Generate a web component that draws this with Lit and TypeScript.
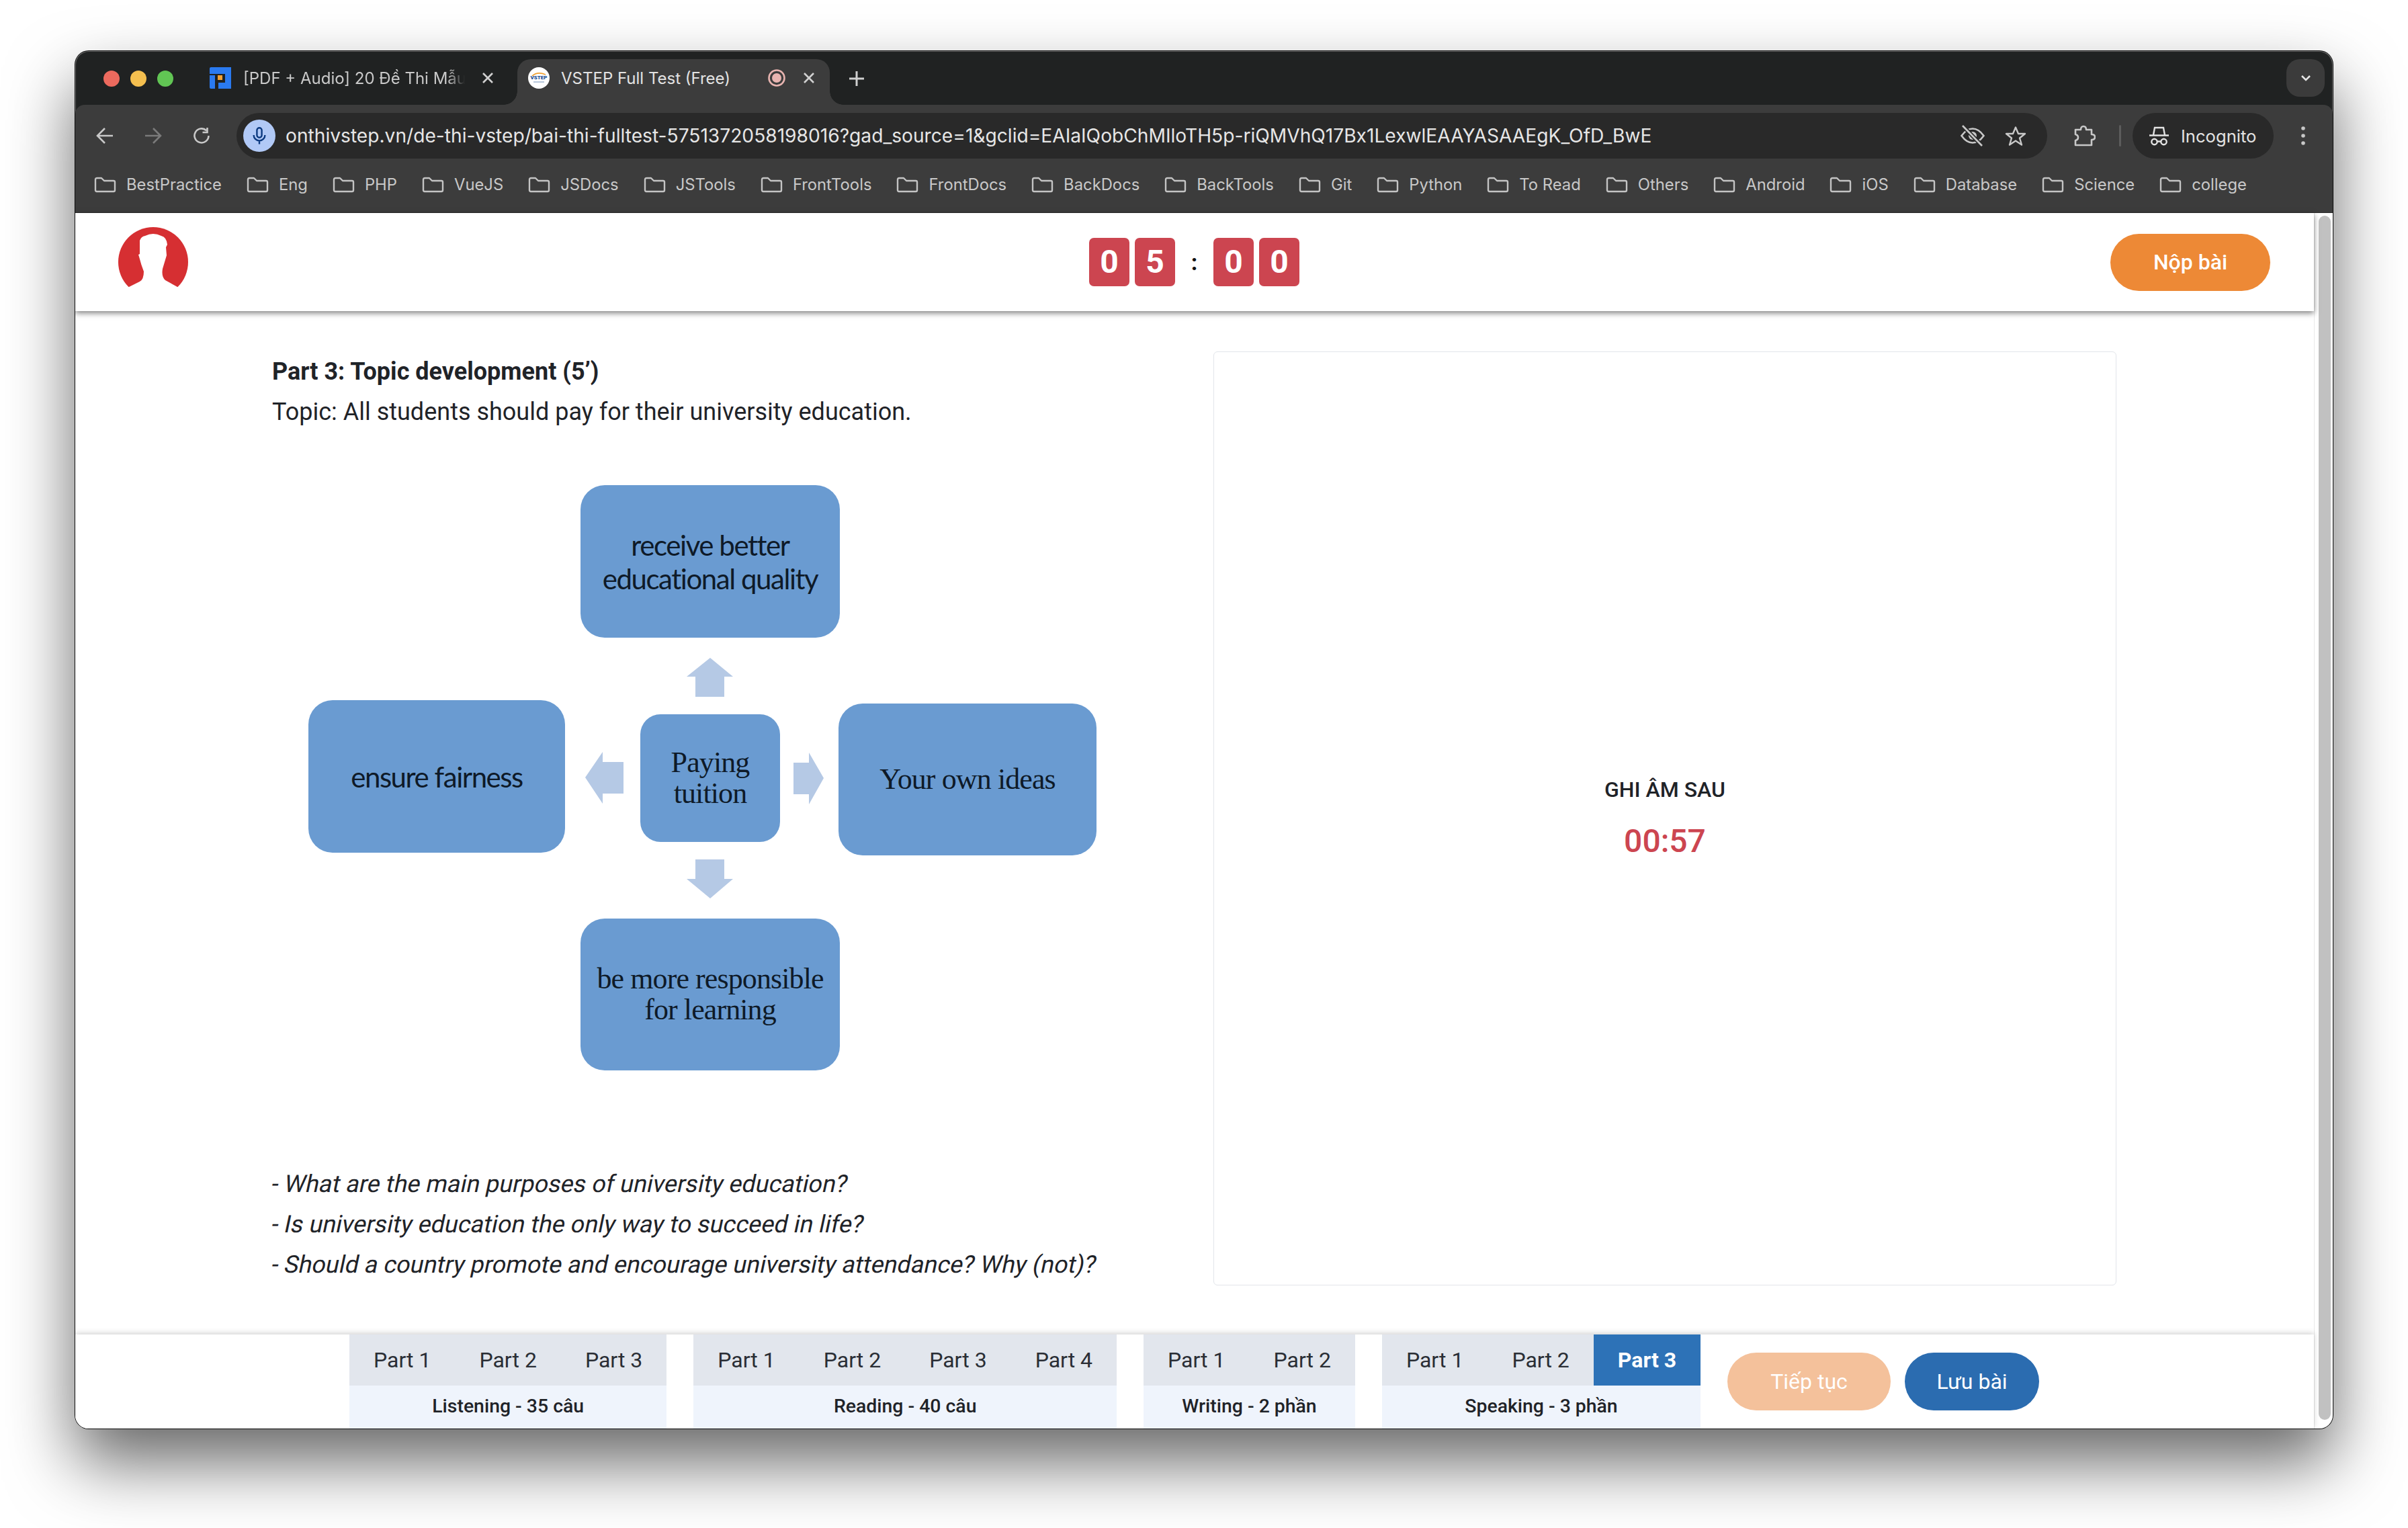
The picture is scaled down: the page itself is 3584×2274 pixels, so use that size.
import { LitElement, css, html, svg } from "lit";
import { customElement } from "lit/decorators.js";

const BOOKMARKS = ["BestPractice", "Eng", "PHP", "VueJS", "JSDocs", "JSTools", "FrontTools", "FrontDocs", "BackDocs", "BackTools", "Git", "Python", "To Read", "Others", "Android", "iOS", "Database", "Science", "college"];

const URL_TEXT = "onthivstep.vn/de-thi-vstep/bai-thi-fulltest-5751372058198016?gad_source=1&gclid=EAIaIQobChMIloTH5p-riQMVhQ17Bx1LexwlEAAYASAAEgK_OfD_BwE";

const PROMPTS = [
  "- What are the main purposes of university education?",
  "- Is university education the only way to succeed in life?",
  "- Should a country promote and encourage university attendance? Why (not)?",
];

const SECTIONS = [
  { label: "Listening - 35 câu", parts: ["Part 1", "Part 2", "Part 3"] },
  { label: "Reading - 40 câu", parts: ["Part 1", "Part 2", "Part 3", "Part 4"] },
  { label: "Writing - 2 phần", parts: ["Part 1", "Part 2"] },
  { label: "Speaking - 3 phần", parts: ["Part 1", "Part 2", "Part 3"], active: 2 },
];

// diagram origin is 405,681 in the page
const NODES = [
  { x: 459, y: 41, w: 386, h: 227, r: 36, serif: false, lines: ["receive better", "educational quality"] },
  { x: 54, y: 361, w: 382, h: 227, r: 36, serif: false, lines: ["ensure fairness"] },
  { x: 548, y: 382, w: 208, h: 190, r: 30, serif: true, lines: ["Paying", "tuition"] },
  { x: 843, y: 366, w: 384, h: 226, r: 36, serif: true, lines: ["Your own ideas"] },
  { x: 459, y: 686, w: 386, h: 226, r: 36, serif: true, lines: ["be more responsible", "for learning"] },
];

const ARROWS = [
  "652,298 686,326 673,326 673,356 630,356 630,326 617,326",
  "630,598 673,598 673,627 686,627 652,656 617,627 630,627",
  "466,476 492,438 492,453 523,453 523,500 492,500 492,515",
  "776,454 799,454 799,439 821,477 799,516 799,501 776,501",
];

const folder = svg`<path d="M2 4.5Q2 2 4.5 2H11L15 6H29Q31 6 31 8V20Q31 22 29 22H4Q2 22 2 20Z" fill="none" stroke="#c4c4c4" stroke-width="2.4" stroke-linejoin="round"/>`;

@customElement("app-root")
export class AppRoot extends LitElement {
  static styles = css`
    :host {
      display: block;
      width: 3584px;
      height: 2274px;
      padding: 76px 112px 148px;
      box-sizing: border-box;
      background: #fff;
      overflow: hidden;
      font-family: Roboto, sans-serif;
      color: #1f2328;
    }
    svg { display: block; flex: none; }

    .window {
      height: 100%;
      display: flex;
      flex-direction: column;
      border-radius: 20px;
      overflow: hidden;
      background: #202222;
      box-shadow: 0 50px 100px rgba(0, 0, 0, 0.6), 0 0 0 1px #111, inset 0 0 0 1px #6a6a6a;
    }

    .tabbar {
      height: 80px;
      flex: none;
      display: flex;
      align-items: flex-start;
      padding-left: 42px;
      font-family: Inter, sans-serif;
      font-size: 24px;
      color: #c9c9c9;
    }
    .lights { display: flex; gap: 16px; margin-top: 29px; }
    .light { width: 24px; height: 24px; border-radius: 50%; }
    .tab-one {
      display: flex;
      align-items: center;
      height: 32px;
      margin-top: 24px;
      margin-left: 54px;
    }
    .tab-one .title {
      width: 330px;
      margin-left: 18px;
      white-space: nowrap;
      -webkit-mask-image: linear-gradient(90deg, #000 92%, transparent);
      mask-image: linear-gradient(90deg, #000 92%, transparent);
    }
    .tab-one .close { margin-left: 24px; }
    .tab-active {
      position: relative;
      display: flex;
      align-items: center;
      align-self: flex-end;
      height: 68px;
      margin-left: 34px;
      padding: 0 23px 12px 16px;
      box-sizing: border-box;
      width: 465px;
      background: #3c3c3c;
      border-radius: 20px 20px 0 0;
      color: #e3e3e3;
    }
    .tab-active::before, .tab-active::after {
      content: "";
      position: absolute;
      bottom: 0;
      width: 20px;
      height: 20px;
    }
    .tab-active::before { left: -20px; background: radial-gradient(circle at 0 0, transparent 19.5px, #3c3c3c 20px); }
    .tab-active::after { right: -20px; background: radial-gradient(circle at 100% 0, transparent 19.5px, #3c3c3c 20px); }
    .tab-active .title { width: 289px; flex: none; margin: 0 0 0 17px; white-space: nowrap; }
    .tab-active .record { margin-left: 19px; }
    .tab-active .close { margin-left: 25px; }
    .new-tab { margin: 29px 0 0 28px; }
    .tab-list {
      width: 57px;
      height: 56px;
      margin: 12px 12px 0 auto;
      border-radius: 20px;
      background: #3b3b3b;
      display: flex;
      align-items: center;
      justify-content: center;
    }

    .toolbar {
      flex: none;
      height: 161px;
      box-sizing: border-box;
      background: #3c3c3c;
      border-radius: 14px 14px 0 0;
      border-bottom: 1px solid #2e2e2e;
      font-family: Inter, sans-serif;
    }
    .nav-row {
      display: flex;
      align-items: center;
      height: 68px;
      padding: 12px 41px 0 8px;
    }
    .nav-btn {
      width: 72px;
      display: flex;
      justify-content: center;
      flex: none;
    }
    .address {
      flex: 1;
      min-width: 0;
      height: 68px;
      margin-left: 16px;
      display: flex;
      align-items: center;
      padding: 0 31px 0 10px;
      border-radius: 34px;
      background: #292929;
    }
    .mic {
      width: 48px;
      height: 48px;
      flex: none;
      border-radius: 50%;
      background: #b1c9f6;
      display: flex;
      align-items: center;
      justify-content: center;
    }
    .url {
      flex: 1;
      margin-left: 15px;
      font-size: 28.17px;
      color: #e6e6e6;
      white-space: nowrap;
    }
    .address-icons { display: flex; align-items: center; gap: 30px; }
    .puzzle { margin-left: 39px; }
    .divider { width: 3px; height: 32px; margin-left: 35px; background: #5c5c5c; border-radius: 2px; flex: none; }
    .incognito {
      width: 210px;
      height: 68px;
      margin-left: 17px;
      box-sizing: border-box;
      padding-left: 25px;
      display: flex;
      align-items: center;
      gap: 18px;
      border-radius: 34px;
      background: #292929;
      color: #e3e3e3;
      font-size: 25.6px;
      flex: none;
    }
    .dots { margin-left: 41px; }

    .bookmarks {
      display: flex;
      align-items: center;
      gap: 37px;
      height: 23px;
      margin: 27px 0 0 28px;
      font-size: 23.8px;
      color: #c8c8c8;
      white-space: nowrap;
    }
    .bookmark { display: flex; align-items: center; gap: 15px; }

    .body { flex: 1; min-height: 0; display: flex; background: #fff; }
    .page { flex: 1; min-width: 0; display: flex; flex-direction: column; }
    .scrollbar {
      width: 28px;
      flex: none;
      box-sizing: border-box;
      border-left: 1px solid #e9e9e9;
      padding: 4px 3px 13px 6px;
      display: flex;
    }
    .scrollbar div { flex: 1; background: #c1c1c1; border-radius: 9px; }

    .header {
      position: relative;
      z-index: 1;
      flex: none;
      height: 146px;
      display: grid;
      grid-template-columns: 1fr auto 1fr;
      align-items: center;
      padding: 0 65px 0 64px;
      background: #fff;
      box-shadow: 0 3px 8px rgba(0, 0, 0, 0.5);
    }
    .timer { display: flex; align-items: center; gap: 8px; }
    .digit {
      width: 60px;
      height: 72px;
      border-radius: 7px;
      background: #cc4550;
      color: #fff;
      font-size: 48px;
      font-weight: 700;
      line-height: 72px;
      text-align: center;
    }
    .colon { width: 41px; text-align: center; font-size: 34px; font-weight: 700; color: #111; }
    .submit {
      justify-self: end;
      width: 238px;
      height: 85px;
      border-radius: 43px;
      background: #ed8936;
      color: #fff;
      font-size: 32px;
      font-weight: 500;
      display: flex;
      align-items: center;
      justify-content: center;
    }

    .main { flex: 1; min-height: 0; display: flex; padding: 60px 0 0 293px; }
    .question { width: 1401px; flex: none; font-size: 36px; line-height: 60px; color: #1f2328; }
    .question b { font-weight: 700; display: block; }
    .diagram { position: relative; height: 1051px; margin-top: 38px; }
    .node {
      position: absolute;
      background: #6a9bd1;
      color: #0e1a28;
      display: flex;
      flex-direction: column;
      align-items: center;
      justify-content: center;
      text-align: center;
      font-family: Lato, sans-serif;
      font-size: 42px;
      line-height: 50px;
      letter-spacing: -1.45px;
      white-space: nowrap;
    }
    .node.serif { font-family: "Liberation Serif", serif; font-size: 44px; line-height: 46px; letter-spacing: -0.9px; }
    .arrows { position: absolute; left: 0; top: 0; }
    .prompt { transform: skewX(-12deg); transform-origin: 0 50%; }
    .panel {
      width: 1344px;
      height: 1390px;
      flex: none;
      box-sizing: border-box;
      border: 1px solid #e2e5ea;
      border-radius: 6px;
      display: flex;
      flex-direction: column;
      align-items: center;
      justify-content: center;
    }
    .panel .label { font-size: 32px; font-weight: 500; line-height: 40px; }
    .panel .time { font-size: 48px; font-weight: 500; line-height: 60px; margin-top: 27px; color: #cc4550; }

    .footer {
      position: relative;
      flex: none;
      height: 140px;
      display: flex;
      padding-left: 408px;
      gap: 40px;
      background: #fff;
      box-shadow: 0 -2px 8px rgba(0, 0, 0, 0.18);
    }
    .section { display: flex; flex-direction: column; flex: none; }
    .parts { display: flex; height: 76px; background: #e2e6ed; }
    .part {
      padding: 0 36px;
      font-size: 32px;
      line-height: 76px;
      color: #2a2e35;
      white-space: nowrap;
    }
    .part.active { background: #2d72b7; color: #fff; font-weight: 700; }
    .section-label {
      flex: 1;
      background: #eff4fc;
      text-align: center;
      font-size: 28.4px;
      font-weight: 500;
      line-height: 62px;
      color: #1f2328;
    }
    .actions { display: flex; align-items: center; gap: 21px; margin-top: -1px; }
    .btn {
      height: 86px;
      border-radius: 43px;
      color: #fff;
      font-size: 32px;
      display: flex;
      align-items: center;
      justify-content: center;
    }
    .btn.next { width: 243px; background: #f4c19b; }
    .btn.save { width: 200px; background: #2b6cb0; }
  `;

  private closeIcon() {
    return html`<svg class="close" width="20" height="20" viewBox="0 0 20 20"><path d="M3 3 17 17M17 3 3 17" stroke="#d0d0d0" stroke-width="2.6"/></svg>`;
  }

  private renderTabs() {
    return html`
      <div class="tabbar">
        <div class="lights">
          <div class="light" style="background:#ec6a5e"></div>
          <div class="light" style="background:#f4bf4f"></div>
          <div class="light" style="background:#61c554"></div>
        </div>
        <div class="tab-one">
          <svg width="32" height="32" viewBox="0 0 32 32">
            <path d="M2 0H32V32H13V23H23V10H0V2Q0 0 2 0Z" fill="#2a7af0"/>
            <path d="M0 12H8V32H2Q0 32 0 30Z" fill="#2a7af0"/>
            <rect x="12" y="12" width="7" height="7" fill="#f5a234"/>
          </svg>
          <div class="title">[PDF + Audio] 20 Đề Thi Mẫu</div>
          ${this.closeIcon()}
        </div>
        <div class="tab-active">
          <svg width="32" height="32" viewBox="0 0 32 32">
            <circle cx="16" cy="16" r="16" fill="#fff"/>
            <path d="M6 13Q14 6 26 11" fill="none" stroke="#f0a030" stroke-width="1.6"/>
            <text x="16" y="18" text-anchor="middle" font-family="Roboto" font-size="8" font-weight="900" fill="#1c4f96">VSTEP</text>
            <path d="M8 22H24" stroke="#6f8fb8" stroke-width="1"/>
          </svg>
          <div class="title">VSTEP Full Test (Free)</div>
          <svg class="record" width="26" height="26" viewBox="0 0 26 26">
            <circle cx="13" cy="13" r="11.5" fill="none" stroke="#e8b4b0" stroke-width="2.6"/>
            <circle cx="13" cy="13" r="7" fill="#e8b4b0"/>
          </svg>
          ${this.closeIcon()}
        </div>
        <svg class="new-tab" width="24" height="24" viewBox="0 0 24 24"><path d="M12 1V23M1 12H23" stroke="#cfcfcf" stroke-width="3"/></svg>
        <div class="tab-list">
          <svg width="16" height="10" viewBox="0 0 16 10"><path d="M2 2 8 8 14 2" fill="none" stroke="#e3e3e3" stroke-width="2.6"/></svg>
        </div>
      </div>
    `;
  }

  private renderToolbar() {
    return html`
      <div class="toolbar">
        <div class="nav-row">
          <div class="nav-btn">
            <svg width="26" height="26" viewBox="0 0 26 26"><path d="M13 2 2 13 13 24M2 13H25" fill="none" stroke="#c8c8c8" stroke-width="2.6"/></svg>
          </div>
          <div class="nav-btn">
            <svg width="26" height="26" viewBox="0 0 26 26"><path d="M13 2 24 13 13 24M24 13H1" fill="none" stroke="#7a7a7a" stroke-width="2.6"/></svg>
          </div>
          <div class="nav-btn">
            <svg width="26" height="26" viewBox="0 0 26 26"><path d="M23.5 13A10.5 10.5 0 1 1 20.2 5.3M21.5 1V8H14.5" fill="none" stroke="#c8c8c8" stroke-width="2.6"/></svg>
          </div>
          <div class="address">
            <div class="mic">
              <svg width="20" height="26" viewBox="0 0 20 26">
                <rect x="6.4" y="1.2" width="7.2" height="14.6" rx="3.6" fill="none" stroke="#0c3a80" stroke-width="2.4"/>
                <path d="M1.6 12A8.4 8.4 0 0 0 18.4 12M10 20.5V25.500" fill="none" stroke="#0c3a80" stroke-width="2.4"/>
              </svg>
            </div>
            <div class="url">${URL_TEXT}</div>
            <div class="address-icons">
              <svg width="36" height="32" viewBox="0 0 36 32">
                <path d="M1.5 16Q9 5.5 18 5.5T34.5 16Q27 26.5 18 26.5T1.5 16Z" fill="none" stroke="#c8c8c8" stroke-width="2.6"/>
                <circle cx="18" cy="16" r="6" fill="#c8c8c8"/>
                <path d="M3 1 32 31" stroke="#292929" stroke-width="6"/>
                <path d="M3 1 32 31" stroke="#c8c8c8" stroke-width="2.6"/>
              </svg>
              <svg width="32" height="31" viewBox="0 0 32 31"><path d="M16 2.5 20 12H30L22 18.5 25 28.5 16 22.5 7 28.5 10 18.5 2 12H12Z" fill="none" stroke="#c8c8c8" stroke-width="2.4" stroke-linejoin="round"/></svg>
            </div>
          </div>
          <svg class="puzzle" width="33" height="33" viewBox="0 0 33 33"><path d="M3 7H11Q11 2 15 2T19 7H27V14Q32 14 32 18T27 22V30H3V23Q7 22 7 18.500T3 14Z" fill="none" stroke="#c8c8c8" stroke-width="2.6" stroke-linejoin="round"/></svg>
          <div class="divider"></div>
          <div class="incognito">
            <svg width="29" height="29" viewBox="0 0 29 29">
              <path d="M0 13.500H29M6 13 8 2H21L23 13" fill="none" stroke="#e3e3e3" stroke-width="2.4"/>
              <circle cx="7.500" cy="23" r="4.200" fill="none" stroke="#e3e3e3" stroke-width="2.400"/>
              <circle cx="21.500" cy="23" r="4.200" fill="none" stroke="#e3e3e3" stroke-width="2.400"/>
              <path d="M11.700 22.500H17.300" stroke="#e3e3e3" stroke-width="2.400"/>
            </svg>
            <span>Incognito</span>
          </div>
          <svg class="dots" width="6" height="28" viewBox="0 0 6 28"><circle cx="3" cy="3" r="2.800" fill="#c8c8c8"/><circle cx="3" cy="14" r="2.800" fill="#c8c8c8"/><circle cx="3" cy="25" r="2.800" fill="#c8c8c8"/></svg>
        </div>
        <div class="bookmarks">
          ${BOOKMARKS.map((b) => html`<div class="bookmark"><svg width="33" height="24" viewBox="0 0 33 24">${folder}</svg><span>${b}</span></div>`)}
        </div>
      </div>
    `;
  }

  private renderHeader() {
    return html`
      <div class="header">
        <svg width="104" height="104" viewBox="36 18 104 104">
          <circle cx="88" cy="70" r="52" fill="#d62f32"/>
          <path d="M48 108 52 107 68 99Q74 96 74 84 70 74 67 62L66 59 68 58V38Q70 32 76 31 88 25 100 31 108 33 109 44L107 48 108 60 105 70 102 80Q100 92 106 97L124 107 130 108V124H48Z" fill="#fff"/>
        </svg>
        <div class="timer">
          <div class="digit">0</div>
          <div class="digit">5</div>
          <div class="colon">:</div>
          <div class="digit">0</div>
          <div class="digit">0</div>
        </div>
        <div class="submit">Nộp bài</div>
      </div>
    `;
  }

  private renderDiagram() {
    return html`
      <div class="diagram">
        <svg class="arrows" width="1300" height="960" viewBox="0 0 1300 960">
          ${ARROWS.map((p) => svg`<polygon points=${p} fill="#b5c9e5"/>`)}
        </svg>
        ${NODES.map((n) => html`
          <div
            class="node ${n.serif ? "serif" : ""}"
            style="left:${n.x}px;top:${n.y}px;width:${n.w}px;height:${n.h}px;border-radius:${n.r}px"
          >
            ${n.lines.map((l) => html`<div>${l}</div>`)}
          </div>
        `)}
      </div>
    `;
  }

  private renderFooter() {
    return html`
      <div class="footer">
        ${SECTIONS.map((s) => html`
          <div class="section">
            <div class="parts">
              ${s.parts.map((p, i) => html`<div class="part ${s.active === i ? "active" : ""}">${p}</div>`)}
            </div>
            <div class="section-label">${s.label}</div>
          </div>
        `)}
        <div class="actions">
          <div class="btn next">Tiếp tục</div>
          <div class="btn save">Lưu bài</div>
        </div>
      </div>
    `;
  }

  render() {
    return html`
      <div class="window">
        ${this.renderTabs()}
        ${this.renderToolbar()}
        <div class="body">
          <div class="page">
            ${this.renderHeader()}
            <div class="main">
              <div class="question">
                <b>Part 3: Topic development (5’)</b>
                <div>Topic: All students should pay for their university education.</div>
                ${this.renderDiagram()}
                ${PROMPTS.map((p) => html`<div class="prompt">${p}</div>`)}
              </div>
              <div class="panel">
                <div class="label">GHI ÂM SAU</div>
                <div class="time">00:57</div>
              </div>
            </div>
            ${this.renderFooter()}
          </div>
          <div class="scrollbar"><div></div></div>
        </div>
      </div>
    `;
  }
}
